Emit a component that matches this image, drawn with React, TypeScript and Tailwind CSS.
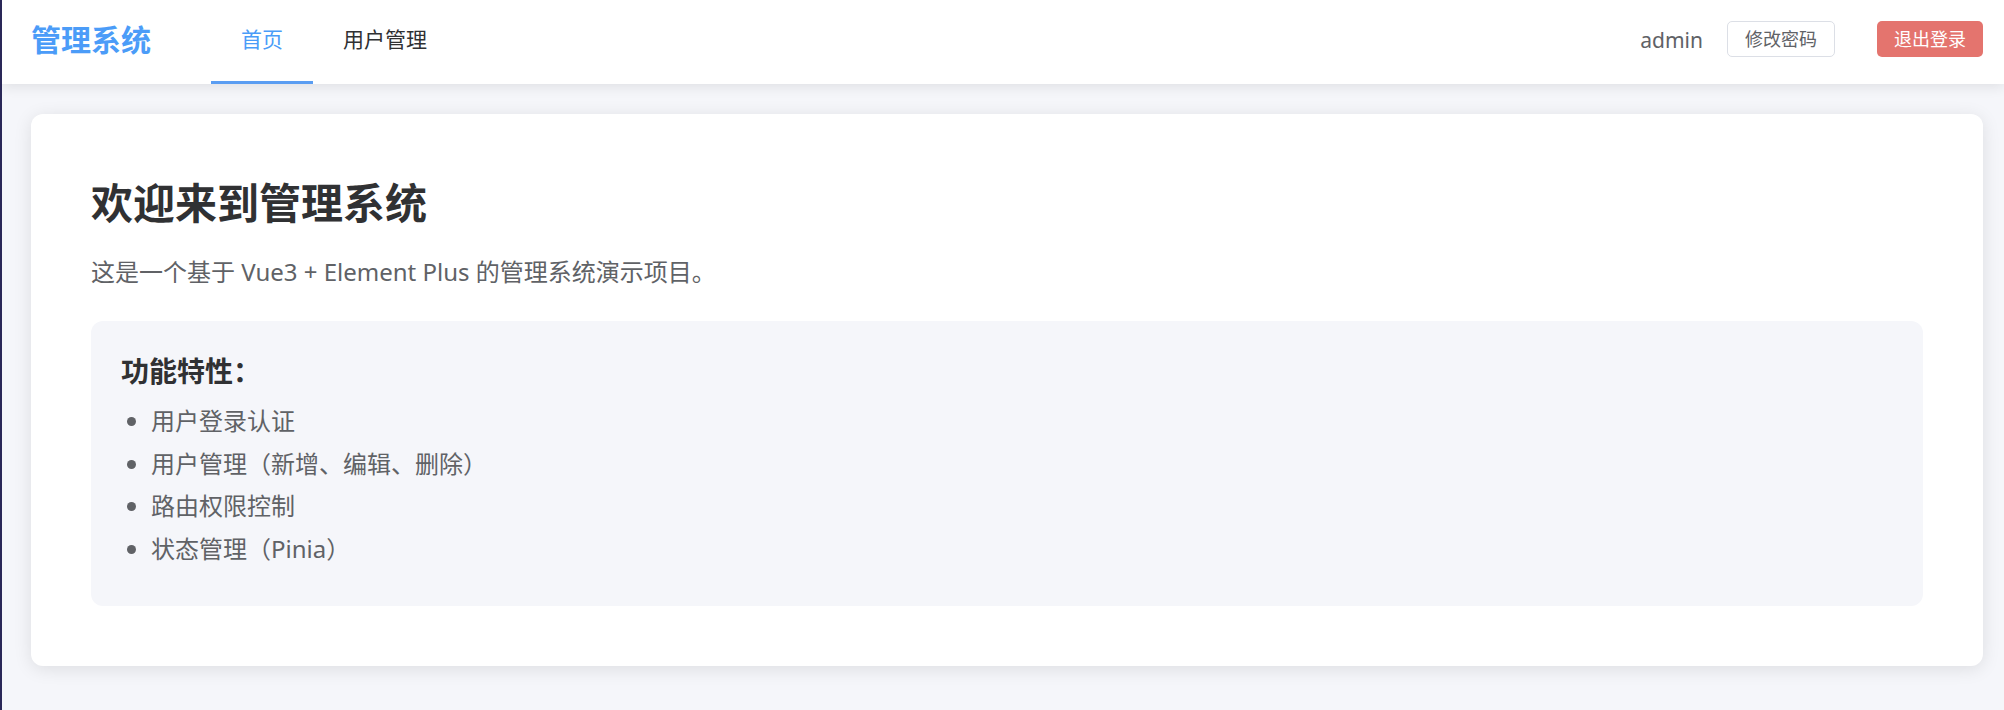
import React from "react";

const font = { fontFamily: '"Noto Sans", "Noto Sans CJK SC", sans-serif' };

export default function App() {
  const features = [
    "用户登录认证",
    "用户管理（新增、编辑、删除）",
    "路由权限控制",
    "状态管理（Pinia）",
  ];
  return (
    <div
      className="w-[2004px] h-[710px] bg-[#f5f6fa] border-l-2 border-[#2a2858] flex flex-col overflow-hidden"
      style={font}
    >
      <header className="relative z-10 h-[84px] bg-white shadow-[0_3px_12px_rgba(0,0,0,0.09)] flex items-center pl-[29px] pr-[21px]">
        <div className="text-[30px] font-bold text-[#4b9cf8] leading-none mr-[60px] -mt-[4px]">
          管理系统
        </div>
        <nav className="flex h-full">
          <div className="relative h-full px-[30px] flex items-center text-[21px] text-[#4a9cf8]">
            <span className="-mt-[4px]">首页</span>
            <div className="absolute left-0 right-0 bottom-0 h-[3px] bg-[#5a9df2]" />
          </div>
          <div className="h-full px-[30px] flex items-center text-[21px] font-normal text-[#303133]">
            <span className="-mt-[4px]">用户管理</span>
          </div>
        </nav>
        <div className="ml-auto flex items-center -mt-[6px]">
          <span className="text-[21px] text-[#606266] mr-[24px] mt-[3px]">admin</span>
          <button className="h-[36px] px-[17px] text-[18px] text-[#606266] bg-white border border-[#dcdfe6] rounded-[5px] leading-none mr-[42px]">
            修改密码
          </button>
          <button className="h-[36px] px-[17px] text-[18px] text-white bg-[#e4746e] rounded-[5px] leading-none">
            退出登录
          </button>
        </div>
      </header>
      <main className="pt-[30px] pl-[29px] pr-[21px]">
        <div className="bg-white rounded-[12px] shadow-[0_3px_18px_rgba(0,0,0,0.1)] p-[60px]">
          <h1 className="text-[42px] font-bold text-[#303133] leading-[58px]">
            欢迎来到管理系统
          </h1>
          <p className="mt-[22px] text-[24px] text-[#606266] leading-[36px]">
            这是一个基于 Vue3 + Element Plus 的管理系统演示项目。
          </p>
          <div className="mt-[31px] bg-[#f5f6fa] rounded-[12px] pt-[30px] pb-[36px] px-[30px]">
            <h3 className="text-[28px] font-bold text-[#303133] leading-[40px]">
              功能特性：
            </h3>
            <ul className="mt-[9px] list-disc pl-[30px] text-[24px] text-[#606266] marker:text-[#606266]">
              {features.map((f) => (
                <li key={f} className="leading-[42.6px]">
                  {f}
                </li>
              ))}
            </ul>
          </div>
        </div>
      </main>
    </div>
  );
}
